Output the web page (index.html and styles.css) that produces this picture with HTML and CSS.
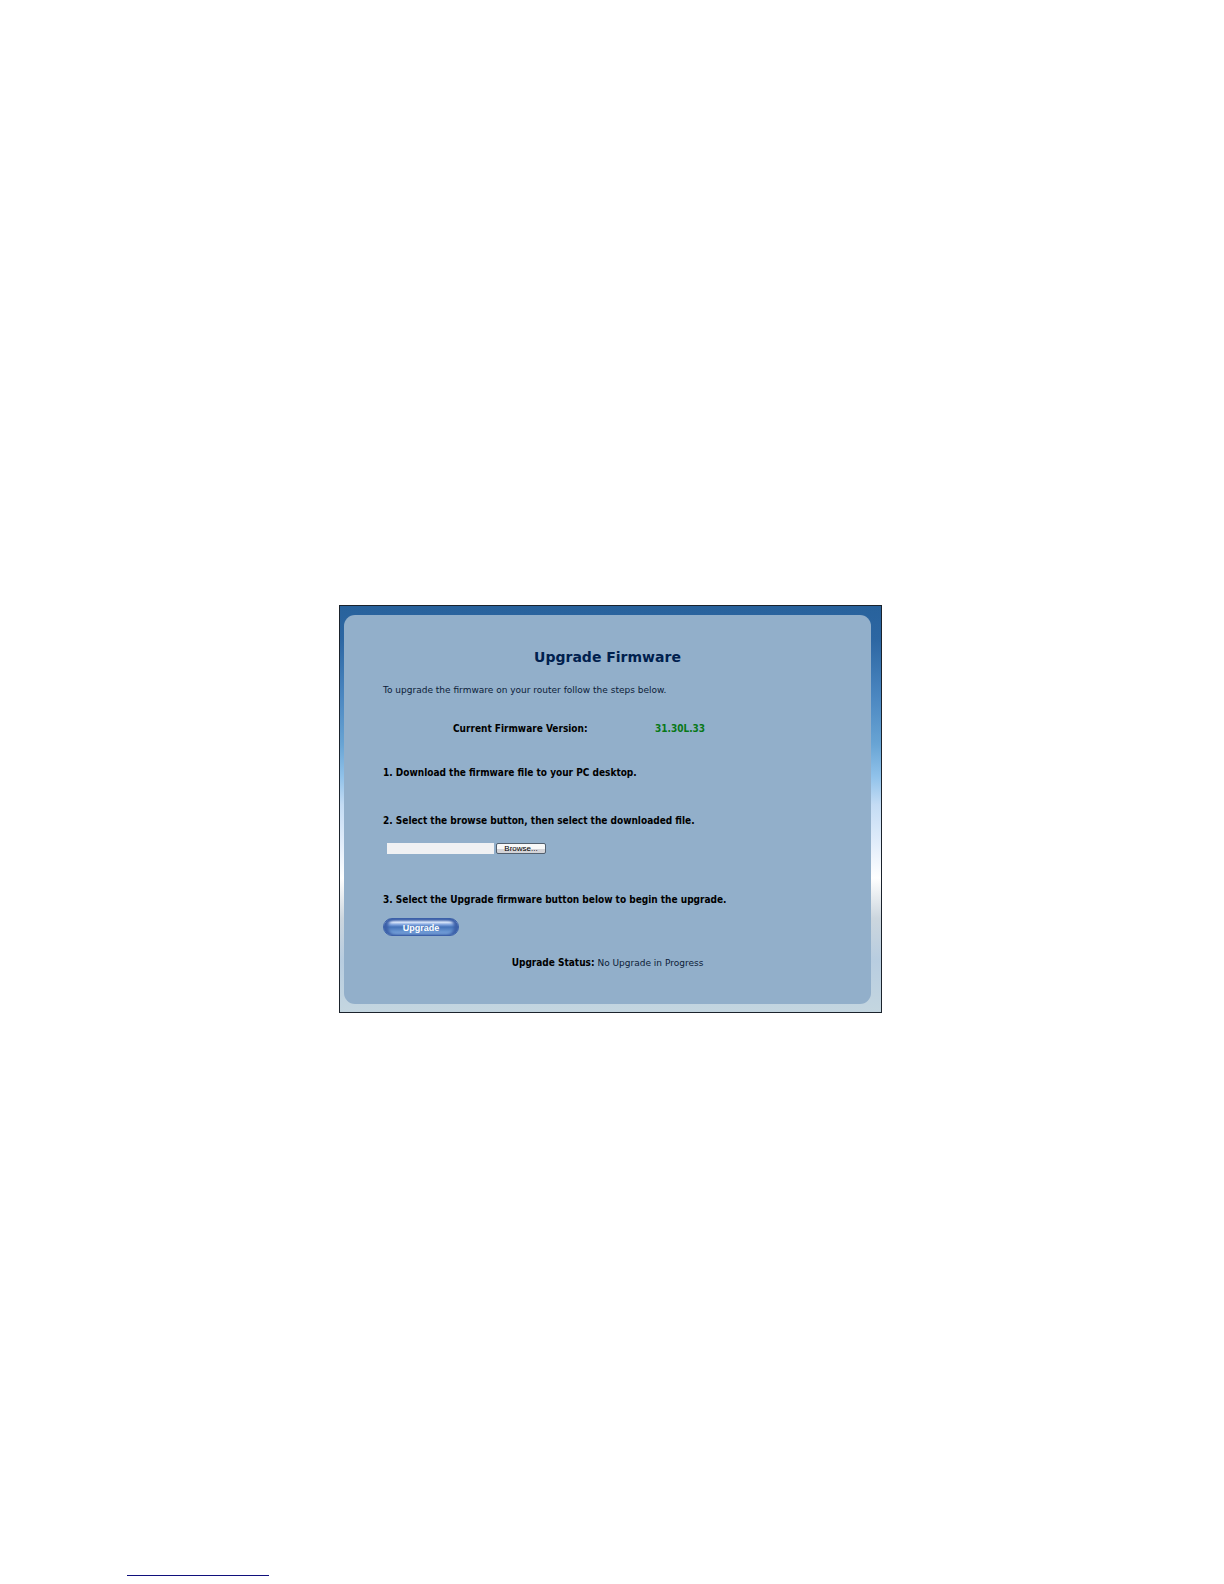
FILE: index.html
```html
<!DOCTYPE html>
<html lang="en">
<head>
    <meta charset="UTF-8">
    <meta name="viewport" content="width=device-width, initial-scale=1.0">
    <title>Upgrade Firmware</title>
    <link rel="stylesheet" href="styles.css">
</head>
<body>

    <main class="frame">
        <form class="panel">
            <h1>Upgrade Firmware</h1>

            <p class="intro">To upgrade the firmware on your router follow the steps below.</p>

            <dl class="version">
                <dt>Current Firmware Version:</dt>
                <dd>31.30L.33</dd>
            </dl>

            <h2 class="download">1. Download the firmware file to your PC desktop.</h2>

            <h2 class="select"><label for="firmwareFile">2. Select the browse button, then select the downloaded file.</label></h2>
            <div class="file-row">
                <input type="text" id="firmwareFile">
                <button type="button" class="browse">Browse...</button>
            </div>

            <h2 class="start">3. Select the Upgrade firmware button below to begin the upgrade.</h2>
            <button type="button" class="upgrade">Upgrade</button>

            <p class="status"><strong>Upgrade Status:</strong> No Upgrade in Progress</p>
        </form>
    </main>

    <hr class="rule">

</body>
</html>
```
FILE: styles.css
```css
* {
    box-sizing: border-box;
}

body {
    margin: 0;
    padding: 605px 130px 8px 127px;
    background-color: #fff;
    color: #000;
    font-family: "DejaVu Sans", Verdana, sans-serif;
    font-size: 9px;
    line-height: 12px;
}

h1, h2, p, dl, dd {
    margin: 0;
}

.frame {
    max-width: 543px;
    margin: 0 auto;
    padding: 9px 10px 8px 4px;
    border: 1px solid #1b232c;
    background: linear-gradient(#28629c 0%, #2c66a2 8%, #4a86c0 22%, #68a4d4 34%, #90c2ea 42%, #c4dcf4 49%, #e0ecfa 58%, #fff 67%, #ccd6de 77%, #b8cde0 87%, #c4d6e0 100%);
}

.panel {
    padding: 33px 39px 35px;
    border-radius: 11px;
    background-color: #92afca;
}

h1 {
    color: #00204e;
    font-size: 14px;
    line-height: 18px;
    text-align: center;
}

.intro {
    margin-top: 18px;
    color: #0c1c38;
}

h2, dt, dd, strong {
    font-family: "DejaVu Sans Condensed", Tahoma, sans-serif;
    font-size: 10px;
    font-weight: bold;
    line-height: 12px;
}

.version {
    display: grid;
    grid-template-columns: 202px 1fr;
    margin-top: 27px;
    padding-left: 70px;
}

.version dd {
    color: #087818;
}

.download {
    margin-top: 32px;
}

.select {
    margin-top: 36px;
}

.start {
    margin-top: 40px;
}

.file-row {
    display: flex;
    gap: 2px;
    margin-top: 16px;
    padding-left: 4px;
}

.file-row input {
    width: 107px;
    height: 11px;
    padding: 0 2px;
    border: 0;
    background-color: #f0f1f3;
    font-size: 9px;
}

.browse {
    width: 50px;
    height: 11px;
    padding: 0;
    border: 1px solid #53606e;
    border-radius: 2px;
    background: linear-gradient(#f8f8f8 50%, #d4d4d8 50%);
    color: #000;
    font-family: "Liberation Sans", Arial, sans-serif;
    font-size: 8px;
    line-height: 9px;
}

.upgrade {
    display: block;
    width: 76px;
    height: 18px;
    margin-top: 12px;
    padding: 2px 0 0;
    border: 1px solid #3c60a8;
    border-radius: 9px;
    background: linear-gradient(#3c60a8 0%, #dce8fa 20%, #7ca0dc 36%, #4472b8 50%, #84b0e4 100%);
    box-shadow: inset 4px 0 3px #3c60a8, inset -4px 0 3px #3c60a8;
    color: #fff;
    font-family: "Liberation Sans", Arial, sans-serif;
    font-size: 9px;
    font-weight: bold;
    line-height: 14px;
}

.status {
    margin-top: 21px;
    color: #0c1c38;
    text-align: center;
}

.status strong {
    color: #000;
}

.rule {
    width: 142px;
    height: 1px;
    margin: 562px 0 0;
    border: 0;
    background-color: #10107c;
}
```
